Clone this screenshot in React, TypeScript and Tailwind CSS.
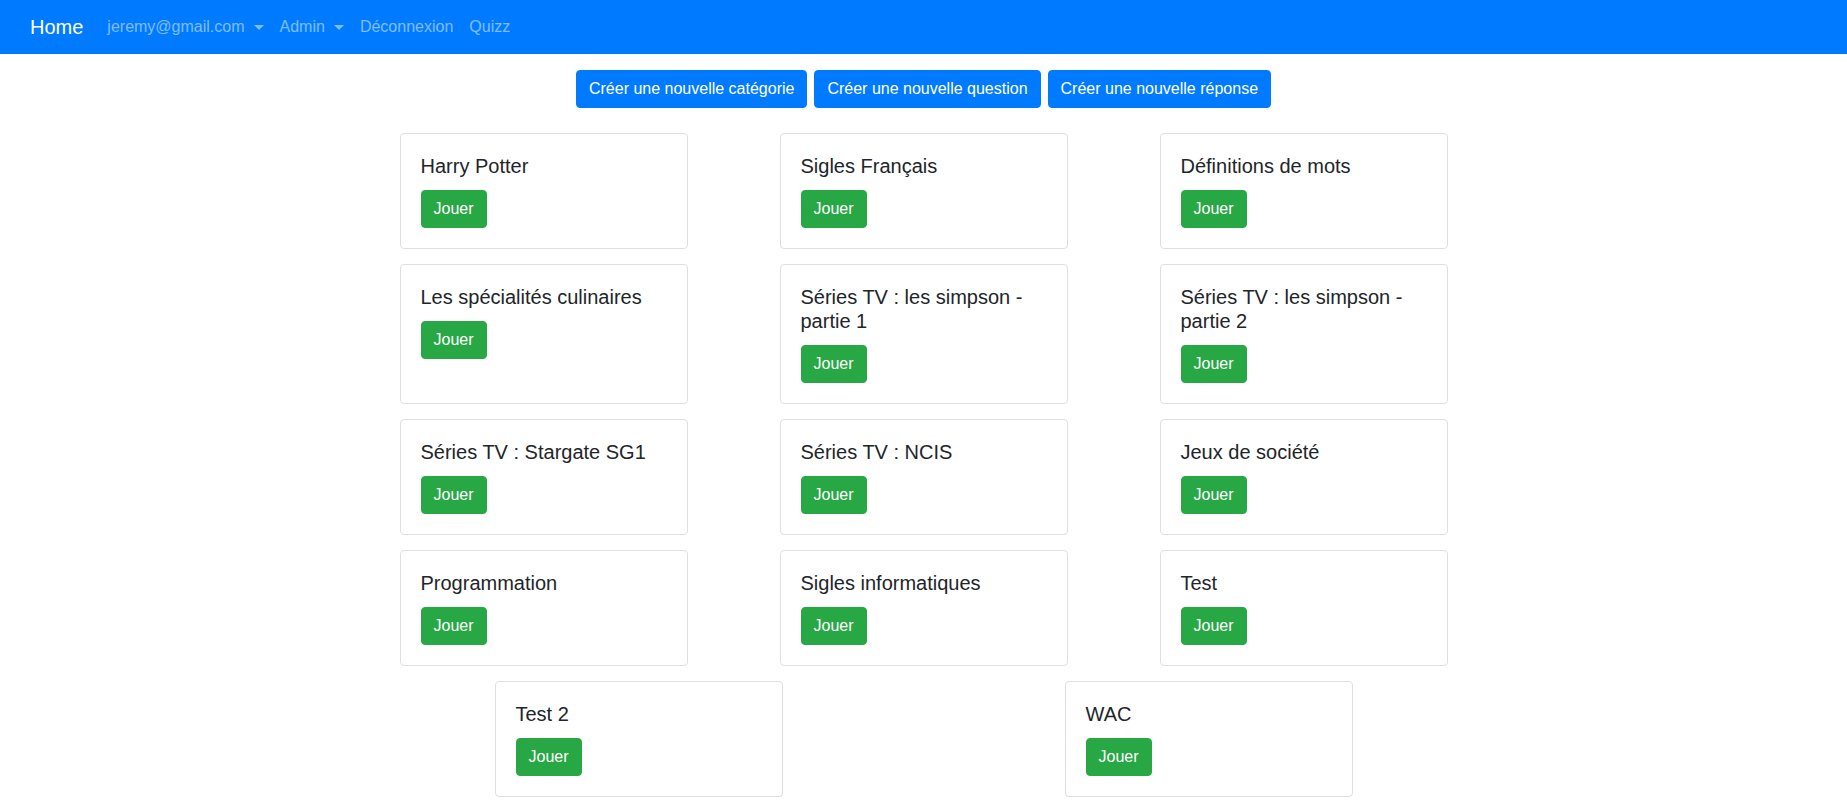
import React from "react";

const rows: string[][] = [
  ["Harry Potter", "Sigles Français", "Définitions de mots"],
  ["Les spécialités culinaires", "Séries TV : les simpson - partie 1", "Séries TV : les simpson - partie 2"],
  ["Séries TV : Stargate SG1", "Séries TV : NCIS", "Jeux de société"],
  ["Programmation", "Sigles informatiques", "Test"],
];

const lastRow = ["Test 2", "WAC"];

function Caret() {
  return (
    <span className="inline-block ml-[9px] w-0 h-0 border-t-[5px] border-x-[5px] border-x-transparent border-t-[rgba(255,255,255,0.5)] border-b-0" />
  );
}

function Card({ title }: { title: string }) {
  return (
    <div className="w-[288px] justify-self-center bg-white border border-[#dfdfdf] rounded-[4px] p-5 flex flex-col items-start">
      <h5 className="text-[20px] leading-[24px] font-normal text-[#212529] mb-3">{title}</h5>
      <button className="h-[38px] px-3 bg-[#28a745] border border-[#28a745] rounded-[4px] text-white text-[16px] leading-[24px]">
        Jouer
      </button>
    </div>
  );
}

export default function App() {
  return (
    <div className="min-h-screen bg-white font-['Liberation_Sans',Arial,sans-serif] text-[#212529]">
      <nav className="h-[54px] bg-[#007bff] flex items-center pl-[30px]">
        <a className="text-white text-[20px] leading-[30px] mr-4 cursor-pointer">Home</a>
        <ul className="flex items-center text-[16px] leading-[24px] text-[rgba(255,255,255,0.5)]">
          <li className="px-2 flex items-center">
            jeremy@gmail.com
            <Caret />
          </li>
          <li className="px-2 flex items-center">
            Admin
            <Caret />
          </li>
          <li className="px-2">Déconnexion</li>
          <li className="px-2">Quizz</li>
        </ul>
      </nav>

      <div className="flex justify-center gap-[7px] pt-4">
        <button className="h-[38px] px-3 bg-[#007bff] border border-[#007bff] rounded-[4px] text-white text-[16px] leading-[24px]">
          Créer une nouvelle catégorie
        </button>
        <button className="h-[38px] px-3 bg-[#007bff] border border-[#007bff] rounded-[4px] text-white text-[16px] leading-[24px]">
          Créer une nouvelle question
        </button>
        <button className="h-[38px] px-3 bg-[#007bff] border border-[#007bff] rounded-[4px] text-white text-[16px] leading-[24px]">
          Créer une nouvelle réponse
        </button>
      </div>

      <div className="w-[1140px] mx-auto mt-[25px] flex flex-col gap-[15px]">
        {rows.map((r, i) => (
          <div key={i} className="grid grid-cols-3">
            {r.map((t) => (
              <Card key={t} title={t} />
            ))}
          </div>
        ))}
        <div className="flex justify-around">
          {lastRow.map((t) => (
            <div key={t} className="w-[380px] grid">
              <Card title={t} />
            </div>
          ))}
        </div>
      </div>
    </div>
  );
}
